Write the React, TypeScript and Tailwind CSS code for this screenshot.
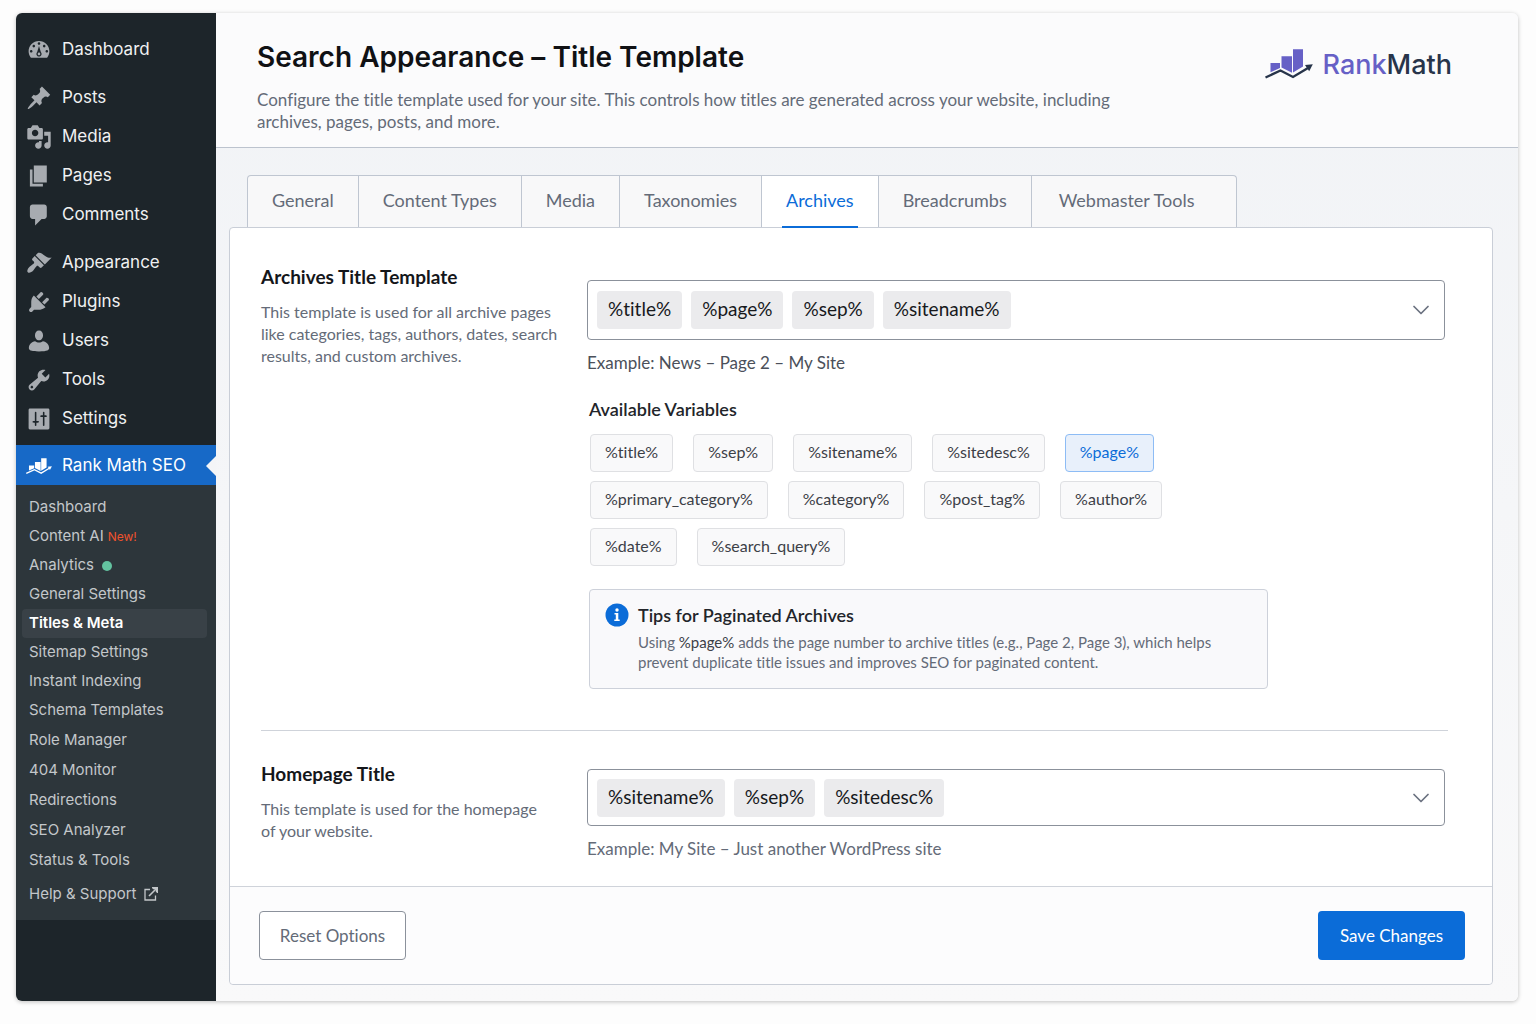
import { ChevronDown } from 'lucide-react';

interface MenuItem {
  label: string;
  icon: string;
}

interface SubItem {
  label: string;
  badge?: string;
  dot?: boolean;
  active?: boolean;
}

const menuGroups: MenuItem[][] = [
  [
    {
      label: 'Dashboard',
      icon: 'M3.76 16h12.48c1.1-1.37 1.76-3.11 1.76-5 0-4.42-3.58-8-8-8s-8 3.58-8 8c0 1.89.66 3.63 1.76 5zM10 4c.55 0 1 .45 1 1s-.45 1-1 1-1-.45-1-1 .45-1 1-1zM6 6c.55 0 1 .45 1 1s-.45 1-1 1-1-.45-1-1 .45-1 1-1zm8 0c.55 0 1 .45 1 1s-.45 1-1 1-1-.45-1-1 .45-1 1-1zm-5.4 5.5L10 7l1.4 4.5c.4.4.6.9.6 1.5 0 1.1-.9 2-2 2s-2-.9-2-2c0-.6.2-1.1.6-1.5zM4 10c.55 0 1 .45 1 1s-.45 1-1 1-1-.45-1-1 .45-1 1-1zm12 0c.55 0 1 .45 1 1s-.45 1-1 1-1-.45-1-1 .45-1 1-1zm-5 3c0-.55-.45-1-1-1s-1 .45-1 1 .45 1 1 1 1-.45 1-1z',
    },
  ],
  [
    {
      label: 'Posts',
      icon: 'M10.44 3.02l1.82-1.82 6.36 6.35-1.83 1.82c-1.05-.68-2.48-.57-3.41.36l-.75.75c-.92.93-1.04 2.35-.35 3.41l-1.83 1.82-2.41-2.41-2.8 2.79c-.42.42-3.38 2.71-3.8 2.29s1.86-3.39 2.28-3.81l2.79-2.79L4.1 9.36l1.83-1.82c1.05.69 2.48.57 3.4-.36l.75-.75c.93-.92 1.05-2.35.36-3.41z',
    },
    {
      label: 'Media',
      icon: 'M13 11V4c0-.55-.45-1-1-1h-1.67L9 1H5L3.67 3H2c-.55 0-1 .45-1 1v7c0 .55.45 1 1 1h10c.55 0 1-.45 1-1zM7 4.5c1.38 0 2.5 1.12 2.5 2.5S8.38 9.5 7 9.5 4.5 8.38 4.5 7 5.62 4.5 7 4.5zM14 6h5v10.5c0 1.38-1.12 2.5-2.5 2.5S14 17.88 14 16.5s1.12-2.5 2.5-2.5c.17 0 .34.02.5.05V9h-3V6zm-4 8.05V13h2v3.5c0 1.38-1.12 2.5-2.5 2.5S7 17.88 7 16.5 8.12 14 9.5 14c.17 0 .34.02.5.05z',
    },
    { label: 'Pages', icon: 'M6 15V2h10v13H6zm-1 1h8v2H3V5h2v11z' },
    {
      label: 'Comments',
      icon: 'M5 2h9c1.1 0 2 .9 2 2v7c0 1.1-.9 2-2 2h-2l-5 5v-5H5c-1.1 0-2-.9-2-2V4c0-1.1.9-2 2-2z',
    },
  ],
  [
    {
      label: 'Appearance',
      icon: 'M14.48 11.06L7.41 3.99l1.5-1.5c.5-.56 2.3-.47 3.51.32 1.21.8 1.43 1.28 2.91 2.1 1.18.64 2.45 1.26 4.45.85zm-.71.71L6.7 4.7 4.93 6.47c-.39.39-.39 1.02 0 1.41l1.06 1.06c.39.39.39 1.03 0 1.42-.6.6-1.43 1.11-2.21 1.69-.35.26-.7.53-1.01.84C1.43 14.23.4 16.08 1.4 17.07c.99 1 2.84-.03 4.18-1.36.31-.31.58-.66.85-1.02.57-.78 1.08-1.61 1.69-2.21.39-.39 1.02-.39 1.41 0l1.06 1.06c.39.39 1.02.39 1.41 0z',
    },
    {
      label: 'Plugins',
      icon: 'M13.11 4.36L9.87 7.6 8 5.73l3.24-3.24c.35-.34 1.05-.2 1.56.32.52.51.66 1.21.31 1.55zm-8 1.77l.91-1.12 9.01 9.01-1.19.84c-.71.71-2.63 1.16-3.82 1.16H6.14L4.9 17.26c-.59.59-1.54.59-2.12 0-.59-.58-.59-1.53 0-2.12l1.24-1.24v-3.88c0-1.13.4-3.19 1.09-3.89zm7.26 3.97l3.24-3.24c.34-.35 1.04-.21 1.55.31.52.51.66 1.21.31 1.55l-3.24 3.25z',
    },
    {
      label: 'Users',
      icon: 'M10 9.5c-1.9 0-3.1-1.8-3.1-3.9S8 1.9 10 1.9s3.1 1.6 3.1 3.7S11.9 9.5 10 9.5zM7 10.2c.9.7 1.9 1 3 1s2.1-.3 3-1c2.7.3 4.8 2.5 4.8 5.2 0 1.5-1.2 2.6-7.8 2.6s-7.8-1.1-7.8-2.6c0-2.7 2.1-4.9 4.8-5.2z',
    },
    {
      label: 'Tools',
      icon: 'M16.68 9.77c-1.34 1.34-3.3 1.67-4.95.99l-5.41 6.52c-.99.99-2.59.99-3.58 0s-.99-2.59 0-3.57l6.52-5.42c-.68-1.65-.35-3.61.99-4.95 1.28-1.28 3.12-1.62 4.72-1.06l-2.89 2.89 2.82 2.82 2.86-2.87c.53 1.58.18 3.39-1.08 4.65zM3.81 16.21c.4.39 1.04.39 1.43 0 .4-.4.4-1.04 0-1.43-.39-.4-1.03-.4-1.43 0-.39.39-.39 1.03 0 1.43z',
    },
    {
      label: 'Settings',
      icon: 'M18 17V3c0-.55-.45-1-1-1H3c-.55 0-1 .45-1 1v14c0 .55.45 1 1 1h14c.55 0 1-.45 1-1zM8 11.5h1c.55 0 1 .2 1 .7s-.45.7-1 .7H8v1.9c0 .28-.22.5-.6.5s-.6-.22-.6-.5v-1.9H6c-.55 0-1-.2-1-.7s.45-.7 1-.7h.8V5c0-.28.22-.5.6-.5s.6.22.6.5zm5-3h-1c-.55 0-1-.2-1-.7s.45-.7 1-.7h1V5c0-.28.22-.5.6-.5s.6.22.6.5v2.1h.8c.55 0 1 .2 1 .7s-.45.7-1 .7h-.8v6.3c0 .28-.22.5-.6.5s-.6-.22-.6-.5z',
    },
  ],
];

const subGroups: SubItem[][] = [
  [
    { label: 'Dashboard' },
    { label: 'Content AI', badge: 'New!' },
    { label: 'Analytics', dot: true },
    { label: 'General Settings' },
    { label: 'Titles & Meta', active: true },
    { label: 'Sitemap Settings' },
    { label: 'Instant Indexing' },
    { label: 'Schema Templates' },
  ],
  [
    { label: 'Role Manager' },
    { label: '404 Monitor' },
    { label: 'Redirections' },
    { label: 'SEO Analyzer' },
    { label: 'Status & Tools' },
  ],
];

const tabs = [
  'General',
  'Content Types',
  'Media',
  'Taxonomies',
  'Archives',
  'Breadcrumbs',
  'Webmaster Tools',
];

const variables = [
  '%title%',
  '%sep%',
  '%sitename%',
  '%sitedesc%',
  '%page%',
  '%primary_category%',
  '%category%',
  '%post_tag%',
  '%author%',
  '%date%',
  '%search_query%',
];

function ChartMark({ bars, line, className }: { bars: string; line: string; className: string }) {
  return (
    <svg viewBox="0 0 48 30" className={className} aria-hidden="true">
      <path fill={bars} d="M5.5 14H15v5l-9.5 4.3zM16.5 7.3H27v16.5l-10.500-5.200zM28 .3h10v17.200L28 23.500z" />
      <path fill="none" stroke={line} strokeWidth="2.4" d="M.5 28.500 15.500 21.500 28 28 43 19" />
      <path fill={line} d="M40 16l7.800-.8-3.600 7z" />
    </svg>
  );
}

function Sidebar() {
  return (
    <nav
      aria-label="Admin menu"
      className="w-[200px] shrink-0 rounded-l-md bg-[#1d252a] pt-[17px] font-['Inter',sans-serif]"
    >
      {menuGroups.map((group, i) => (
        <ul key={i} className={i > 0 ? 'mt-[9px]' : ''}>
          {group.map((item) => (
            <li key={item.label}>
              <a href="#" className="flex h-[39px] items-center gap-[10px] pl-[10px] text-[17px] text-[#f0f1f2]">
                <svg viewBox="0 0 20 20" className="size-[26px] fill-[#a7abb0]" aria-hidden="true">
                  <path fillRule="evenodd" d={item.icon} />
                </svg>
                {item.label}
              </a>
            </li>
          ))}
        </ul>
      ))}

      <a
        href="#"
        className="relative mt-[7px] flex h-10 items-center gap-[10px] bg-[#1769c7] pt-[2px] pl-[10px] text-[17px] text-white"
      >
        <ChartMark bars="#fff" line="#fff" className="w-[26px]" />
        Rank Math SEO
        <span className="absolute top-[11px] right-0 border-y-[10px] border-r-[10px] border-y-transparent border-r-[#f4f5f7]" />
      </a>

      <div className="bg-[#2d363b] pt-2 pb-[11px] text-[15px] text-[#c3c7ca]">
        {subGroups.map((group, i) => (
          <ul key={i}>
            {group.map((item) => (
              <li key={item.label} className="px-[6px]">
                <a
                  href="#"
                  className={`flex items-center rounded px-[7px] ${i === 0 ? 'h-[29px]' : 'h-[30px]'} ${
                    item.active ? 'mr-[3px] bg-[#394147] font-semibold text-white' : ''
                  }`}
                >
                  {item.label}
                  {item.badge && <span className="ml-1 text-xs text-[#f0522d]">{item.badge}</span>}
                  {item.dot && <span className="ml-2 size-[10px] rounded-full bg-[#63c3a0]" />}
                </a>
              </li>
            ))}
          </ul>
        ))}
        <a href="#" className="mt-1 flex h-[30px] items-center gap-2 px-[13px]">
          Help &amp; Support
          <svg viewBox="0 0 14 14" className="size-[14px] fill-none stroke-current" aria-hidden="true">
            <path d="M6 2.5H1V13h10.5V8.5" strokeWidth="1.3" />
            <path d="M5 9l7-7" strokeWidth="1.6" />
            <path d="M8 .8h5.3V6M9 1.6h3.5V5" strokeWidth="1.4" />
          </svg>
        </a>
      </div>
    </nav>
  );
}

function TokenSelect({ id, tokens, compact }: { id: string; tokens: string[]; compact?: boolean }) {
  return (
    <button
      type="button"
      aria-labelledby={id}
      aria-haspopup="listbox"
      className={`flex w-full items-center gap-[9px] rounded border border-[#8b919b] bg-white px-[9px] text-[19px] leading-7 text-[#17191c] ${
        compact ? 'h-[57px]' : 'h-[60px]'
      }`}
    >
      {tokens.map((token) => (
        <span key={token} className="rounded bg-[#ebebed] px-[11px] pt-1 pb-[6px]">
          {token}
        </span>
      ))}
      <ChevronDown className="ml-auto size-7 text-[#6b7280]" strokeWidth={1.5} />
    </button>
  );
}

export default function App() {
  return (
    <div className="flex min-h-screen bg-[#fdfdfd] pt-[13px] pr-[18px] pb-[23px] pl-4 font-['Lato',sans-serif] text-[#646b78] [font-variant-ligatures:none]">
      <div className="flex flex-1 rounded-md shadow-[0_1px_4px_rgba(0,0,0,0.25)]">
        <Sidebar />

        <main className="flex flex-1 flex-col rounded-r-md bg-linear-to-b from-[#f1f3f6] to-[#f9f9fa]">
          <header className="flex items-start justify-between rounded-tr-md border-b border-[#bcc3ce] bg-[#fbfbfc] pt-[25px] pr-[66px] pb-[14px] pl-[41px]">
            <div>
              <h1 className="font-['Inter',sans-serif] text-[28px] leading-[38px] font-semibold text-[#101114]">
                Search Appearance – Title Template
              </h1>
              <p className="mt-[13px] max-w-[860px] text-[17px] leading-[22px]">
                Configure the title template used for your site. This controls how titles are generated across your
                website, including archives, pages, posts, and more.
              </p>
            </div>
            <div className="mt-[10px] flex items-center gap-[10px] font-['Inter',sans-serif] text-[27px] leading-[34px] font-medium text-[#27344a]">
              <ChartMark bars="#6660c6" line="#27344a" className="mb-[3px] w-12" />
              <span>
                <span className="text-[#6660c6]">Rank</span>Math
              </span>
            </div>
          </header>

          <div className="flex flex-1 flex-col pt-[27px] pr-[25px] pb-4 pl-[13px]">
            <div role="tablist" className="ml-[18px] flex self-start rounded-t border border-b-0 border-[#bfc6d1] bg-[#f8f8f9]">
              {tabs.map((tab) => {
                const active = tab === 'Archives';
                return (
                  <button
                    key={tab}
                    type="button"
                    role="tab"
                    aria-selected={active}
                    className={`relative h-[51px] border-r border-[#bfc6d1] px-6 pb-[3px] text-lg last:border-r-0 last:pr-[42px] last:pl-[27px] ${
                      active ? 'bg-white text-[#0b6cd8]' : ''
                    }`}
                  >
                    {tab}
                    {active && <span className="absolute inset-x-5 -bottom-px z-10 h-[2px] bg-[#0b6cd8]" />}
                  </button>
                );
              })}
            </div>

            <form className="flex flex-1 flex-col rounded border border-[#c9ced7] bg-white">
              <section className="mr-[44px] ml-[31px] flex border-b border-[#cfd3da] pb-[41px]">
                <div className="w-[326px] shrink-0 pt-9">
                  <h2 id="archives-title" className="text-[19px] leading-[26px] font-bold text-[#14161a]">
                    Archives Title Template
                  </h2>
                  <p className="mt-[11px] max-w-[305px] text-base leading-[22px]">
                    This template is used for all archive pages like categories, tags, authors, dates, search results,
                    and custom archives.
                  </p>
                </div>
                <div className="flex-1 pt-[52px] pr-[3px]">
                  <TokenSelect id="archives-title" tokens={['%title%', '%page%', '%sep%', '%sitename%']} />
                  <p className="mt-3 text-[17px] leading-[22px] text-[#4b505a]">Example: News – Page 2 – My Site</p>
                  <h3 className="mt-[23px] ml-[2px] text-lg leading-6 font-semibold text-[#22252a]">
                    Available Variables
                  </h3>
                  <div className="mt-[13px] ml-[3px] flex max-w-[600px] flex-wrap gap-x-5 gap-y-[9px]">
                    {variables.map((name) => (
                      <button
                        key={name}
                        type="button"
                        className={`h-[38px] rounded border px-[14px] pb-[2px] text-base ${
                          name === '%page%'
                            ? 'border-[#8dbcf5] bg-[#e8f0fb] text-[#0b6cd8]'
                            : 'border-[#dfe0e3] bg-[#f9f9fa] text-[#3c4047]'
                        }`}
                      >
                        {name}
                      </button>
                    ))}
                  </div>
                  <div className="mt-[23px] ml-[2px] flex max-w-[679px] gap-[9px] rounded border border-[#cdd1da] bg-[#f9f9fb] px-[15px] pt-[13px] pb-4">
                    <svg viewBox="0 0 24 24" className="size-6 shrink-0" aria-hidden="true">
                      <circle cx="12" cy="12" r="11.5" fill="#0b6cd8" />
                      <circle cx="12" cy="7" r="1.7" fill="#fff" />
                      <path fill="#fff" d="M9.5 10h3.8v6.5h1.4V18H9.3v-1.5h1.5v-5H9.5z" />
                    </svg>
                    <div>
                      <h4 className="text-lg leading-6 font-semibold text-[#22252a]">Tips for Paginated Archives</h4>
                      <p className="mt-[5px] max-w-[600px] text-[15px] leading-5">
                        Using <span className="inline-block text-[#3c4047]">%page%</span> adds the page number to
                        archive titles (e.g., Page 2, Page 3), which helps prevent duplicate title issues and improves
                        SEO for paginated content.
                      </p>
                    </div>
                  </div>
                </div>
              </section>

              <section className="mr-[44px] ml-[31px] flex pb-[26px]">
                <div className="w-[326px] shrink-0 pt-[30px]">
                  <h2 id="homepage-title" className="text-[19px] leading-[26px] font-bold text-[#14161a]">
                    Homepage Title
                  </h2>
                  <p className="mt-[11px] max-w-[290px] text-base leading-[22px]">
                    This template is used for the homepage of your website.
                  </p>
                </div>
                <div className="flex-1 pt-[38px] pr-[3px]">
                  <TokenSelect id="homepage-title" tokens={['%sitename%', '%sep%', '%sitedesc%']} compact />
                  <p className="mt-3 text-[17px] leading-[22px]">Example: My Site – Just another WordPress site</p>
                </div>
              </section>

              <footer className="flex flex-1 items-start justify-between rounded-b border-t border-[#cfd3da] bg-[#fcfcfd] pt-6 pr-[27px] pb-[23px] pl-[29px]">
                <button
                  type="button"
                  className="h-[49px] w-[147px] rounded border border-[#8b919b] bg-white text-[17px]"
                >
                  Reset Options
                </button>
                <button type="submit" className="h-[49px] w-[147px] rounded bg-[#0b6cd8] text-[17px] text-white">
                  Save Changes
                </button>
              </footer>
            </form>
          </div>
        </main>
      </div>
    </div>
  );
}
